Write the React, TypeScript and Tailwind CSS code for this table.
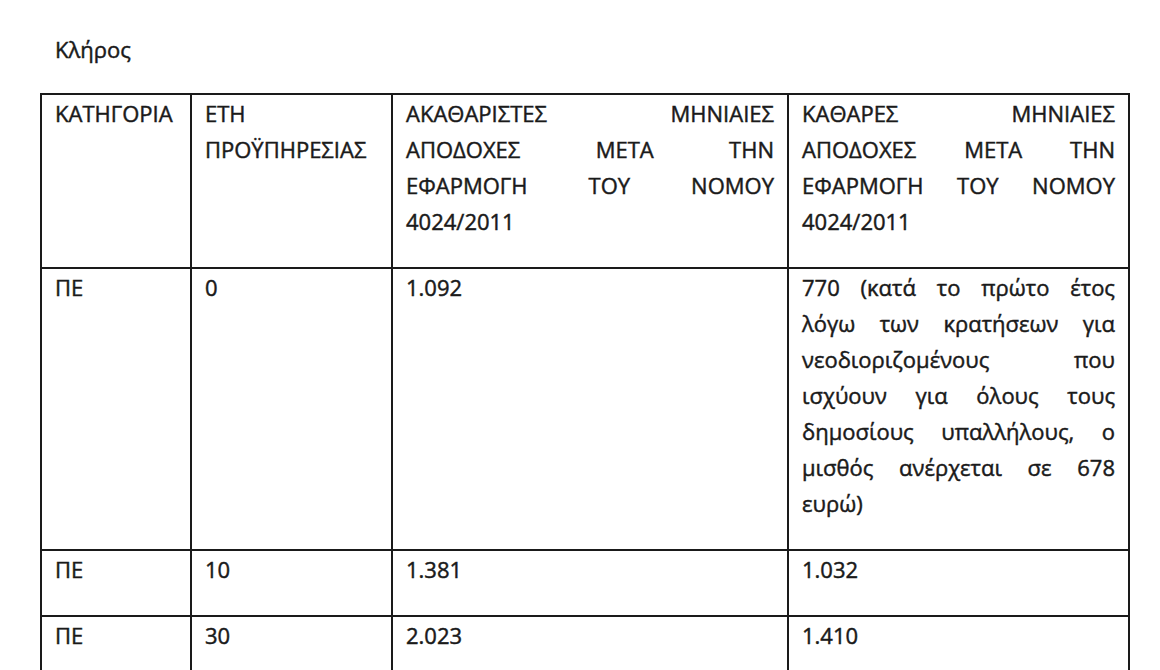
const font = { fontFamily: '"Open Sans", "Noto Sans", sans-serif' };

type Line = { text: string; last?: boolean };

function Para({ lines }: { lines: Line[] }) {
  return (
    <>
      {lines.map((l, i) => (
        <div
          key={i}
          className={
            l.last
              ? 'text-left whitespace-nowrap'
              : 'text-justify [text-align-last:justify] whitespace-nowrap'
          }
        >
          {l.text}
        </div>
      ))}
    </>
  );
}

const cell = 'border-2 border-[#1a1a1a] align-top px-[13px] pt-0 pb-[28px] whitespace-nowrap';

const headGross: Line[] = [
  { text: 'ΑΚΑΘΑΡΙΣΤΕΣ ΜΗΝΙΑΙΕΣ' },
  { text: 'ΑΠΟΔΟΧΕΣ ΜΕΤΑ ΤΗΝ' },
  { text: 'ΕΦΑΡΜΟΓΗ ΤΟΥ ΝΟΜΟΥ' },
  { text: '4024/2011', last: true },
];

const headNet: Line[] = [
  { text: 'ΚΑΘΑΡΕΣ ΜΗΝΙΑΙΕΣ' },
  { text: 'ΑΠΟΔΟΧΕΣ ΜΕΤΑ ΤΗΝ' },
  { text: 'ΕΦΑΡΜΟΓΗ ΤΟΥ ΝΟΜΟΥ' },
  { text: '4024/2011', last: true },
];

const note: Line[] = [
  { text: '770 (κατά το πρώτο έτος' },
  { text: 'λόγω των κρατήσεων για' },
  { text: 'νεοδιοριζομένους που' },
  { text: 'ισχύουν για όλους τους' },
  { text: 'δημοσίους υπαλλήλους, ο' },
  { text: 'μισθός ανέρχεται σε 678' },
  { text: 'ευρώ)', last: true },
];

const rows = [
  { cat: 'ΠΕ', years: '10', gross: '1.381', net: '1.032' },
  { cat: 'ΠΕ', years: '30', gross: '2.023', net: '1.410' },
];

export default function App() {
  return (
    <div
      className="w-[1160px] h-[670px] overflow-hidden bg-white text-[#1a1a1a] text-[22px] font-normal [-webkit-text-stroke:0.45px_#1a1a1a] leading-[36px] pt-[31px]"
      style={font}
    >
      <div className="pl-[55px]">Κλήρος</div>
      <table className="mt-[26px] ml-[40px] w-[1088px] table-fixed border-collapse">
        <colgroup>
          <col className="w-[150px]" />
          <col className="w-[201px]" />
          <col className="w-[396px]" />
          <col className="w-[341px]" />
        </colgroup>
        <tbody>
          <tr>
            <td className={cell}>ΚΑΤΗΓΟΡΙΑ</td>
            <td className={cell}>
              <div>ΕΤΗ</div>
              <div>ΠΡΟΫΠΗΡΕΣΙΑΣ</div>
            </td>
            <td className={cell}>
              <Para lines={headGross} />
            </td>
            <td className={cell}>
              <Para lines={headNet} />
            </td>
          </tr>
          <tr>
            <td className={cell}>ΠΕ</td>
            <td className={cell}>0</td>
            <td className={cell}>1.092</td>
            <td className={cell}>
              <Para lines={note} />
            </td>
          </tr>
          {rows.map((r) => (
            <tr key={r.years}>
              <td className={cell}>{r.cat}</td>
              <td className={cell}>{r.years}</td>
              <td className={cell}>{r.gross}</td>
              <td className={cell}>{r.net}</td>
            </tr>
          ))}
        </tbody>
      </table>
    </div>
  );
}
